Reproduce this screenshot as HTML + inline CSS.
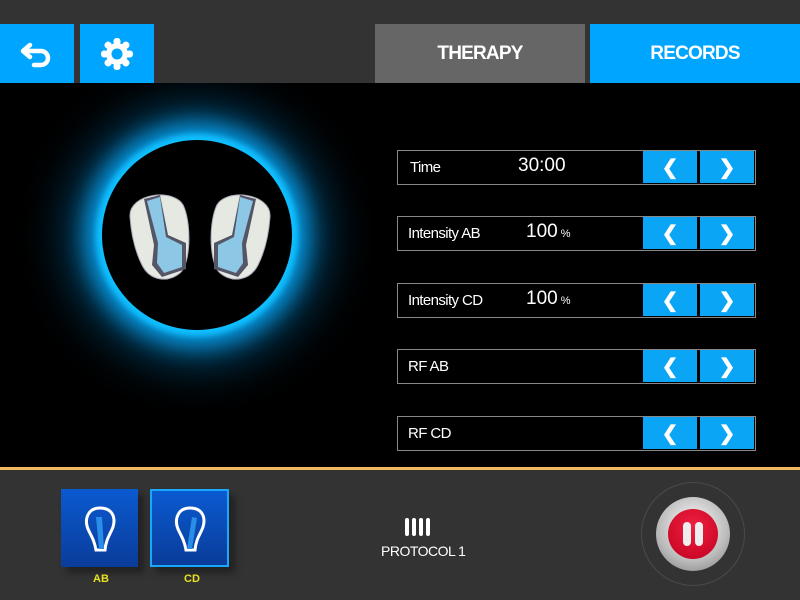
<!DOCTYPE html>
<html><head><style>
*{margin:0;padding:0;box-sizing:border-box}
body{width:800px;height:600px;overflow:hidden;background:#000;font-family:"Liberation Sans",sans-serif;position:relative;color:#fff}
.abs{position:absolute}
.top{left:0;top:0;width:800px;height:83px;background:#333}
.btn{background:#00a5ff;display:flex;align-items:center;justify-content:center}
.tab{top:24px;height:59px;display:flex;align-items:center;justify-content:center;font-size:19px;font-weight:bold;letter-spacing:-0.8px}
.row{left:397px;width:359px;height:35px;border:1.5px solid #888;background:#000}
.row .lab{position:absolute;left:10px;top:8px;font-size:15px;letter-spacing:-0.6px}
.row .val{position:absolute;top:4px;font-size:19px}
.arr{position:absolute;top:0;height:32px;width:54px;background:#0aa5f5;display:flex;align-items:center;justify-content:center;font-size:20px;font-weight:bold}
.bottom{left:0;top:470px;width:800px;height:130px;background:#333}
</style></head><body>
<div class="abs top"></div>
<div class="abs btn" style="left:0;top:24px;width:74px;height:59px">
<svg width="34" height="28" viewBox="0 0 34 28"><path d="M10 5 L3 11 L10 17 M4 11 H21 A7 7 0 0 1 21 25 H14" fill="none" stroke="#fff" stroke-width="4.5" stroke-linecap="round" stroke-linejoin="round"/></svg>
</div>
<div class="abs btn" style="left:80px;top:24px;width:74px;height:59px">
<svg width="36" height="36" viewBox="-18 -18 36 36"><g fill="#fff"><circle r="11"/>
<g id="t"><rect x="-3.5" y="-16" width="7" height="7" rx="3"/></g>
<use href="#t" transform="rotate(45)"/><use href="#t" transform="rotate(90)"/><use href="#t" transform="rotate(135)"/><use href="#t" transform="rotate(180)"/><use href="#t" transform="rotate(225)"/><use href="#t" transform="rotate(270)"/><use href="#t" transform="rotate(315)"/></g><circle r="5.5" fill="#00a5ff"/></svg>
</div>
<div class="abs tab" style="left:375px;width:210px;background:#666">THERAPY</div>
<div class="abs tab" style="left:590px;width:210px;background:#00a5ff">RECORDS</div>

<div class="abs" style="left:0;top:83px;width:390px;height:384px;overflow:hidden">
<div class="abs" style="left:102px;top:57px;width:190px;height:190px;border-radius:50%;background:#000;box-shadow:0 0 6px 6px #10c0ff,0 0 22px 16px #0898e0,0 0 50px 30px #04507a"></div>
</div>
<svg class="abs" style="left:120px;top:185px" width="160" height="100" viewBox="0 0 160 100">
<g id="el">
<path d="M10 32 C8 8 56 2 64 22 C72 42 70 80 60 88 C48 98 30 96 22 80 C14 64 11 46 10 32Z" fill="#e6e8e2" stroke="#aab" stroke-width="1"/>
<path d="M24 14 L40 10 L48 50 L66 58 L66 84 L42 92 L32 80 L34 60Z" fill="#556"/>
<path d="M27 16 L40 12 L46 52 L62 60 L62 82 L44 88 L37 78 L38 58Z" fill="#8cc8e6"/>
</g>
<use href="#el" transform="translate(160,0) scale(-1,1)"/>
</svg>

<div class="abs row" style="top:150px"><span class="lab" style="left:12px">Time</span><span class="val" style="left:120px">30:00</span>
<div class="arr" style="left:245px">❮</div><div class="arr" style="left:302px">❯</div></div>
<div class="abs row" style="top:216px"><span class="lab">Intensity AB</span><span class="val" style="left:128px">100<small style="font-size:11px"> %</small></span>
<div class="arr" style="left:245px">❮</div><div class="arr" style="left:302px">❯</div></div>
<div class="abs row" style="top:283px"><span class="lab">Intensity CD</span><span class="val" style="left:128px">100<small style="font-size:11px"> %</small></span>
<div class="arr" style="left:245px">❮</div><div class="arr" style="left:302px">❯</div></div>
<div class="abs row" style="top:349px"><span class="lab">RF AB</span>
<div class="arr" style="left:245px">❮</div><div class="arr" style="left:302px">❯</div></div>
<div class="abs row" style="top:416px"><span class="lab">RF CD</span>
<div class="arr" style="left:245px">❮</div><div class="arr" style="left:302px">❯</div></div>

<div class="abs" style="left:0;top:467px;width:800px;height:3px;background:#f0b860"></div>
<div class="abs bottom"></div>
<div class="abs" style="left:61px;top:489px;width:77px;height:78px;background:linear-gradient(#0a5ad0,#0a3c9a);box-shadow:6px 6px 6px #222"></div>
<div class="abs" style="left:150px;top:489px;width:79px;height:78px;background:linear-gradient(#0a5ad0,#0a3c9a);border:2px solid #1aa8ff;box-shadow:6px 6px 6px #222"></div>
<svg class="abs" style="left:80px;top:505px" width="40" height="50" viewBox="0 0 40 50"><path d="M20 3 C8 3 4 14 8 24 C11 31 14 34 16 45 L25 45 C26 34 30 30 33 22 C36 12 32 3 20 3Z" fill="none" stroke="#fff" stroke-width="3"/><path d="M16 12 L22 12 L24 44 L19 44Z" fill="#2a8ee8"/></svg>
<svg class="abs" style="left:170px;top:505px" width="40" height="50" viewBox="0 0 40 50"><path d="M20 3 C8 3 4 14 8 24 C11 31 14 34 16 45 L25 45 C26 34 30 30 33 22 C36 12 32 3 20 3Z" fill="none" stroke="#fff" stroke-width="3"/><path d="M22 12 L27 13 L22 44 L17 44Z" fill="#2a8ee8"/></svg>
<div class="abs" style="left:93px;top:573px;font-size:11px;color:#e8e020;font-weight:bold">AB</div>
<div class="abs" style="left:184px;top:573px;font-size:11px;color:#e8e020;font-weight:bold">CD</div>
<div class="abs" style="left:405px;top:518px;display:flex;gap:3px"><i style="width:4px;height:18px;background:#fff;border-radius:2px"></i><i style="width:4px;height:18px;background:#fff;border-radius:2px"></i><i style="width:4px;height:18px;background:#fff;border-radius:2px"></i><i style="width:4px;height:18px;background:#fff;border-radius:2px"></i></div>
<div class="abs" style="left:381px;top:543px;font-size:14px;letter-spacing:-0.5px">PROTOCOL 1</div>
<div class="abs" style="left:641px;top:482px;width:104px;height:104px;border-radius:50%;border:1px solid #4a4a4a"></div>
<div class="abs" style="left:656px;top:497px;width:74px;height:74px;border-radius:50%;background:radial-gradient(circle at 50% 40%,#fff,#bbb 60%,#777)"></div>
<div class="abs" style="left:668px;top:509px;width:50px;height:50px;border-radius:50%;background:radial-gradient(circle at 50% 35%,#f02040,#c00020)"></div>
<div class="abs" style="left:683px;top:522px;width:8px;height:24px;border-radius:4px;background:#eee"></div>
<div class="abs" style="left:695px;top:522px;width:8px;height:24px;border-radius:4px;background:#eee"></div>
</body></html>
